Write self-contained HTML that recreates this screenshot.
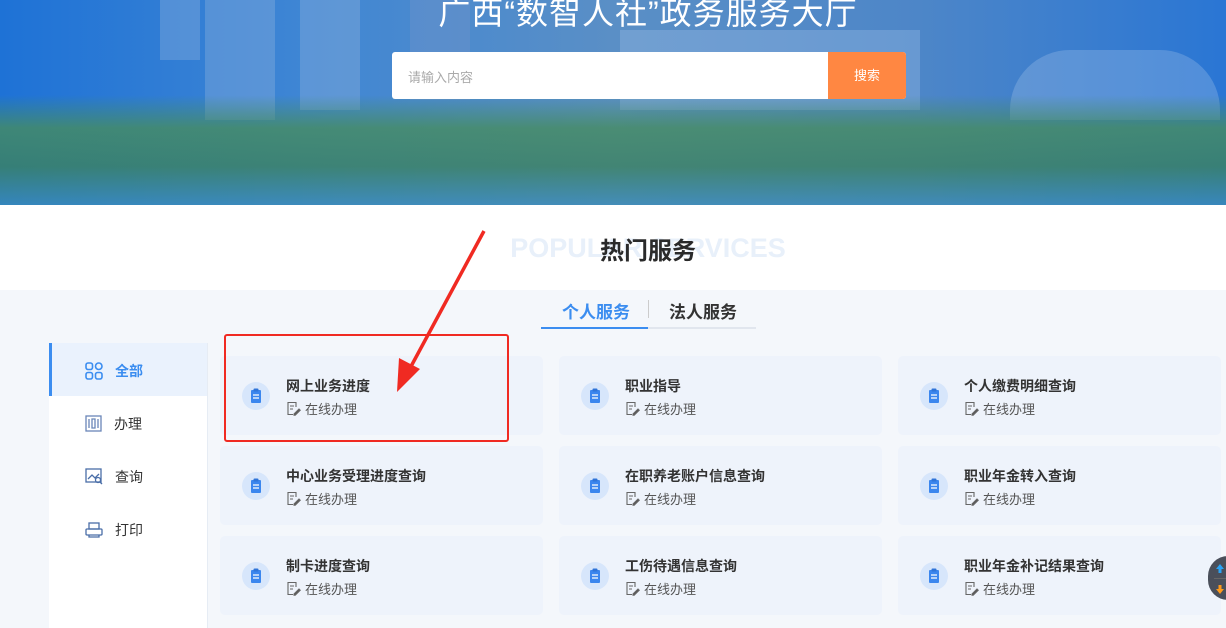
<!DOCTYPE html><html><head><meta charset="utf-8"><style>
*{margin:0;padding:0;box-sizing:border-box}
body{width:1226px;height:628px;overflow:hidden;background:#fff;font-family:"Liberation Sans","Noto Sans CJK SC",sans-serif;position:relative}
.ban{position:absolute;left:0;top:0;width:1226px;height:205px;background:linear-gradient(90deg,#1e72d6 0%,#3f86d4 25%,#5a8fc6 50%,#4d86c8 75%,#2a76d4 100%);overflow:hidden}
.ban .g{position:absolute;left:0;top:95px;width:1226px;height:110px;background:linear-gradient(180deg,rgba(60,130,90,0) 0%,rgba(70,140,95,.8) 30%,rgba(60,130,95,.8) 65%,rgba(60,140,180,.75) 100%)}
.ban .b{position:absolute;top:0;background:rgba(150,180,220,.35)}
.title{position:absolute;left:35px;width:1226px;top:-12px;text-align:center;color:#fff;font-size:32px;letter-spacing:1px}
.search{position:absolute;left:392px;top:52px;width:514px;height:47px;background:#fff;border-radius:3px;overflow:hidden}
.search span{position:absolute;left:16px;top:15px;font-size:13px;color:#aaa}
.search b{position:absolute;right:0;top:0;width:78px;height:47px;background:#ff8742;color:#fff;font-weight:normal;font-size:13px;text-align:center;line-height:47px}
.sec{position:absolute;left:0;top:290px;width:1226px;height:338px;background:#f4f7fb}
.bg{position:absolute;top:233px;left:35px;width:1226px;text-align:center;font-size:27px;font-weight:bold;color:#e8f0fa}
.h{position:absolute;top:231px;left:35px;width:1226px;text-align:center;font-size:24px;font-weight:bold;color:#2a2a2a}
.tab{position:absolute;top:298px;font-size:17px;font-weight:bold}
.side{position:absolute;left:49px;top:343px;width:159px;height:285px;background:#fff;border-right:1px solid #e6ecf4}
.si{height:53px;display:flex;align-items:center;padding-left:36px;font-size:14px;color:#333;padding-top:2px}
.si svg{margin-right:12px}
.card{position:absolute;width:323px;height:79px;background:#eef3fb;border-radius:5px}
.card .ic{position:absolute;left:22px;top:26px;width:28px;height:28px;border-radius:50%;background:#d7e6fb}
.card .t{position:absolute;left:66px;top:20px;font-size:14px;font-weight:bold;color:#333}
.card .s{position:absolute;left:66px;top:43px;font-size:13px;color:#555;display:flex;align-items:center}
</style></head><body>
<div class="ban">
<div class="b" style="left:160px;width:40px;height:60px"></div>
<div class="b" style="left:205px;width:70px;height:120px"></div>
<div class="b" style="left:300px;width:60px;height:110px"></div>
<div class="b" style="left:410px;width:60px;height:100px;background:rgba(120,150,200,.35)"></div>
<div class="b" style="left:620px;top:30px;width:300px;height:80px;background:rgba(170,200,235,.3)"></div>
<div class="b" style="left:1010px;top:50px;width:210px;height:70px;background:rgba(170,200,235,.3);border-radius:60px 60px 0 0"></div>
<div class="g"></div>
<div class="title">广西“数智人社”政务服务大厅</div>
<div class="search"><span>请输入内容</span><b>搜索</b></div>
</div>
<div class="bg">POPULAR SERVICES</div>
<div class="h">热门服务</div>
<div class="sec"></div>
<div class="tab" style="left:562px;color:#3b8df0">个人服务</div>
<div style="position:absolute;left:648px;top:300px;width:1px;height:18px;background:#ccc"></div>
<div class="tab" style="left:669px;color:#333">法人服务</div>
<div style="position:absolute;left:541px;top:327px;width:215px;height:2px;background:#e1e6ee"></div>
<div style="position:absolute;left:541px;top:327px;width:107px;height:2px;background:#3b8df0"></div>
<div class="side">
<div class="si" style="background:#eaf2fd;border-left:3px solid #3b8df0;padding-left:33px;color:#3b8df0;font-weight:bold"><svg width="18" height="18" viewBox="0 0 18 18" fill="none" stroke="#3b8df0" stroke-width="1.6"><rect x="1" y="1" width="6.5" height="6.5" rx="2"/><rect x="10.5" y="1" width="6.5" height="6.5" rx="3.2"/><rect x="1" y="10.5" width="6.5" height="6.5" rx="2"/><rect x="10.5" y="10.5" width="6.5" height="6.5" rx="2"/></svg>全部</div>
<div class="si"><svg width="17" height="17" viewBox="0 0 17 17" fill="none" stroke="#6a86b8" stroke-width="1.3"><rect x="1" y="1" width="15" height="15"/><path d="M4 4v9M7 4h3v9H7zM13 4v9"/></svg>办理</div>
<div class="si"><svg width="18" height="17" viewBox="0 0 18 17" fill="none" stroke="#4a6ea8" stroke-width="1.3"><rect x="1" y="1" width="15" height="13"/><path d="M3 11l4-4 3 3 4-4"/><circle cx="13" cy="12" r="2.5"/><path d="M15 14l2 2"/></svg>查询</div>
<div class="si"><svg width="18" height="16" viewBox="0 0 18 16" fill="none" stroke="#4a6ea8" stroke-width="1.3"><rect x="4" y="1" width="10" height="6"/><rect x="1" y="7" width="16" height="6" rx="1"/><path d="M4 13v2h10v-2"/></svg>打印</div>
</div>

<div class="card" style="left:220px;top:356px"><div class="ic"></div><div class="t">网上业务进度</div><div class="s">在线办理</div></div>
<div class="card" style="left:559px;top:356px"><div class="ic"></div><div class="t">职业指导</div><div class="s">在线办理</div></div>
<div class="card" style="left:898px;top:356px"><div class="ic"></div><div class="t">个人缴费明细查询</div><div class="s">在线办理</div></div>
<div class="card" style="left:220px;top:446px"><div class="ic"></div><div class="t">中心业务受理进度查询</div><div class="s">在线办理</div></div>
<div class="card" style="left:559px;top:446px"><div class="ic"></div><div class="t">在职养老账户信息查询</div><div class="s">在线办理</div></div>
<div class="card" style="left:898px;top:446px"><div class="ic"></div><div class="t">职业年金转入查询</div><div class="s">在线办理</div></div>
<div class="card" style="left:220px;top:536px"><div class="ic"></div><div class="t">制卡进度查询</div><div class="s">在线办理</div></div>
<div class="card" style="left:559px;top:536px"><div class="ic"></div><div class="t">工伤待遇信息查询</div><div class="s">在线办理</div></div>
<div class="card" style="left:898px;top:536px"><div class="ic"></div><div class="t">职业年金补记结果查询</div><div class="s">在线办理</div></div>

<script>
document.querySelectorAll('.ic').forEach(e=>e.innerHTML='<svg width="28" height="28" viewBox="0 0 28 28"><rect x="9" y="8" width="10" height="13" rx="1" fill="#3b86ee"/><rect x="11.5" y="6.5" width="5" height="3" rx="1" fill="#2f74d8"/><path d="M11 13h6M11 16h6" stroke="#fff" stroke-width="1.3"/></svg>');
document.querySelectorAll('.s').forEach(e=>e.insertAdjacentHTML('afterbegin','<svg width="15" height="15" viewBox="0 0 15 15" style="margin-right:4px" fill="none" stroke="#666" stroke-width="1.1"><path d="M10 6V1.5H2v12h5"/><path d="M4 5h4M4 8h3"/><path d="M8 13l5-5 1.2 1.2-5 5H8z" fill="#555"/></svg>'));
</script>
<div style="position:absolute;left:224px;top:334px;width:285px;height:108px;border:2px solid #f02a22;border-radius:3px"></div>
<svg style="position:absolute;left:0;top:0" width="1226" height="628"><path d="M484 231L408 372" stroke="#f02a22" stroke-width="3.5"/><path d="M397 392L399 358L420 369Z" fill="#f02a22"/></svg>
<div style="position:absolute;left:1208px;top:556px;width:40px;height:44px;border-radius:20px;background:#4a4f5a"></div>
<div style="position:absolute;left:1214px;top:578px;width:14px;height:1px;background:#666"></div>
<svg style="position:absolute;left:1214px;top:562px" width="12" height="34"><path d="M6 2l4 5H7.5v4h-3V7H2z" fill="#2aa3f5"/><path d="M6 32l4-5H7.5v-4h-3v4H2z" fill="#ff9a1a"/></svg>
</body></html>
